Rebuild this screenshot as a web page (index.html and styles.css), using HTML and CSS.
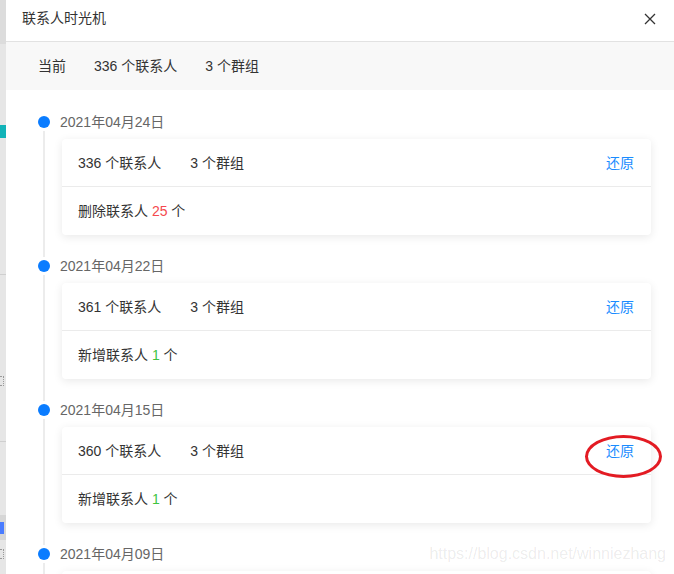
FILE: index.html
```html
<!DOCTYPE html>
<html lang="zh-CN">
<head>
<meta charset="utf-8">
<title>联系人时光机</title>
<link rel="stylesheet" href="styles.css">
</head>
<body>
<div class="page">
  <div class="backdrop">
    <div class="bd-top"></div>
    <div class="bd-gap1"></div>
    <div class="bd-teal"></div>
    <div class="bd-gap2"></div>
    <div class="bd-line"></div>
    <div class="bd-gap3"><span class="bd-mark"></span></div>
    <div class="bd-line"></div>
    <div class="bd-gap4"></div>
    <div class="bd-patch"><span class="bd-mark blue"></span></div>
    <div class="bd-gap5"><span class="bd-mark"></span></div>
  </div>
  <div class="drawer">
    <div class="header">
      <div class="title">联系人时光机</div>
      <svg class="close" width="12" height="12" viewBox="0 0 12 12"><path d="M1 1L11 11M11 1L1 11" stroke="#333" stroke-width="1.3" fill="none"/></svg>
    </div>
    <div class="summary">
      <span>当前</span>
      <span>336 个联系人</span>
      <span>3 个群组</span>
    </div>
    <div class="timeline">
      <div class="item">
        <div class="rail"><span class="dot"></span><span class="line"></span></div>
        <div class="content">
          <div class="date">2021年04月24日</div>
          <div class="card">
            <div class="row top">
              <span class="count">336 个联系人</span>
              <span class="count">3 个群组</span>
              <a class="restore">还原</a>
            </div>
            <div class="row">删除联系人&nbsp;<span class="red">25</span>&nbsp;个</div>
          </div>
        </div>
      </div>
      <div class="item">
        <div class="rail"><span class="dot"></span><span class="line"></span></div>
        <div class="content">
          <div class="date">2021年04月22日</div>
          <div class="card">
            <div class="row top">
              <span class="count">361 个联系人</span>
              <span class="count">3 个群组</span>
              <a class="restore">还原</a>
            </div>
            <div class="row">新增联系人&nbsp;<span class="green">1</span>&nbsp;个</div>
          </div>
        </div>
      </div>
      <div class="item">
        <div class="rail"><span class="dot"></span><span class="line"></span></div>
        <div class="content">
          <div class="date">2021年04月15日</div>
          <div class="card marked">
            <div class="row top">
              <span class="count">360 个联系人</span>
              <span class="count">3 个群组</span>
              <a class="restore">还原</a>
            </div>
            <div class="row">新增联系人&nbsp;<span class="green">1</span>&nbsp;个</div>
            <span class="ring"></span>
          </div>
        </div>
      </div>
      <div class="item">
        <div class="rail"><span class="dot"></span><span class="line"></span></div>
        <div class="content">
          <div class="date">2021年04月09日</div>
          <div class="card"></div>
        </div>
      </div>
    </div>
    <div class="watermark">https://blog.csdn.net/winniezhang</div>
  </div>
</div>
</body>
</html>
```

FILE: styles.css
```css
* { box-sizing: border-box; }
html, body { margin: 0; padding: 0; }
body {
  width: 674px;
  height: 574px;
  overflow: hidden;
  font-family: "Liberation Sans", "Noto Sans CJK SC", sans-serif;
  font-size: 14px;
  color: #333;
  background: #fff;
}
.page { display: flex; height: 574px; }

.backdrop {
  width: 6px;
  flex: none;
  display: flex;
  flex-direction: column;
  background: #e6e6e6;
  overflow: hidden;
}
.bd-top { height: 44px; background: #dcdcdc; flex: none; }
.bd-gap1 { height: 81px; flex: none; }
.bd-teal { height: 13px; background: #12b3b8; flex: none; }
.bd-gap2 { height: 136px; flex: none; }
.bd-line { height: 1px; background: #cfcfcf; flex: none; }
.bd-gap3 { height: 166px; flex: none; display: flex; align-items: flex-start; }
.bd-gap4 { height: 73px; flex: none; }
.bd-patch { height: 25px; background: #d6d6d6; flex: none; display: flex; align-items: center; }
.bd-gap5 { flex: 1; display: flex; align-items: flex-start; }
.bd-mark {
  display: block;
  width: 4px;
  height: 10px;
  border-top: 1px dotted #9a9a9a;
  border-bottom: 1px dotted #9a9a9a;
  border-right: 1px dotted #9a9a9a;
}
.bd-gap3 .bd-mark { margin-top: 101px; }
.bd-mark.blue { height: 12px; border-color: #4a7cff; border-style: solid; }
.bd-gap5 .bd-mark { margin-top: 9px; }

.drawer {
  flex: 1;
  position: relative;
  background: #fff;
  overflow: hidden;
  height: 574px;
}

.header {
  height: 42px;
  border-bottom: 1px solid #e2e2e2;
  display: flex;
  align-items: center;
  justify-content: space-between;
  padding: 0 18px 5px 16px;
}
.title { font-size: 14px; line-height: 20px; color: #333; }
.close { display: block; margin-top: 2px; }

.summary {
  height: 48px;
  background: #f8f8f8;
  display: flex;
  align-items: center;
  gap: 28px;
  padding-left: 32px;
  line-height: 20px;
  color: #333;
}

.timeline { padding: 21px 23px 0 32px; }
.item {
  display: grid;
  grid-template-columns: 12px 1fr;
  column-gap: 12px;
  height: 144px;
}
.rail {
  display: flex;
  flex-direction: column;
  align-items: center;
}
.dot {
  width: 12px;
  height: 12px;
  border-radius: 50%;
  background: #0a7cff;
  margin-top: 5px;
  flex: none;
}
.line {
  width: 2px;
  flex: 1;
  background: #ececec;
  margin: 3px 0 -2px;
}
.content { display: flex; flex-direction: column; }
.date {
  height: 22px;
  line-height: 22px;
  color: #666;
  margin-left: -2px;
}
.card {
  position: relative;
  margin-top: 6px;
  height: 96px;
  background: #fff;
  border-radius: 4px;
  box-shadow: 0 2px 10px rgba(0, 0, 0, 0.09);
  display: flex;
  flex-direction: column;
}
.row {
  height: 48px;
  display: flex;
  align-items: center;
  padding: 0 17px 0 16px;
  line-height: 20px;
}
.row.top { border-bottom: 1px solid #ebebeb; gap: 29px; }
.restore { margin-left: auto; color: #1a8cff; cursor: pointer; }
.red { color: #f5484e; }
.green { color: #3fc43f; }

.ring {
  position: absolute;
  top: 8px;
  right: -11px;
  width: 77px;
  height: 43px;
  border: 3px solid #e31b23;
  border-radius: 50%;
  pointer-events: none;
}

.watermark {
  position: absolute;
  right: 8px;
  bottom: 11px;
  font-family: "Liberation Sans", sans-serif;
  font-size: 16px;
  line-height: 18px;
  color: rgba(0, 0, 0, 0.085);
  text-shadow: 0 0 2px rgba(255, 255, 255, 0.9);
}
```
